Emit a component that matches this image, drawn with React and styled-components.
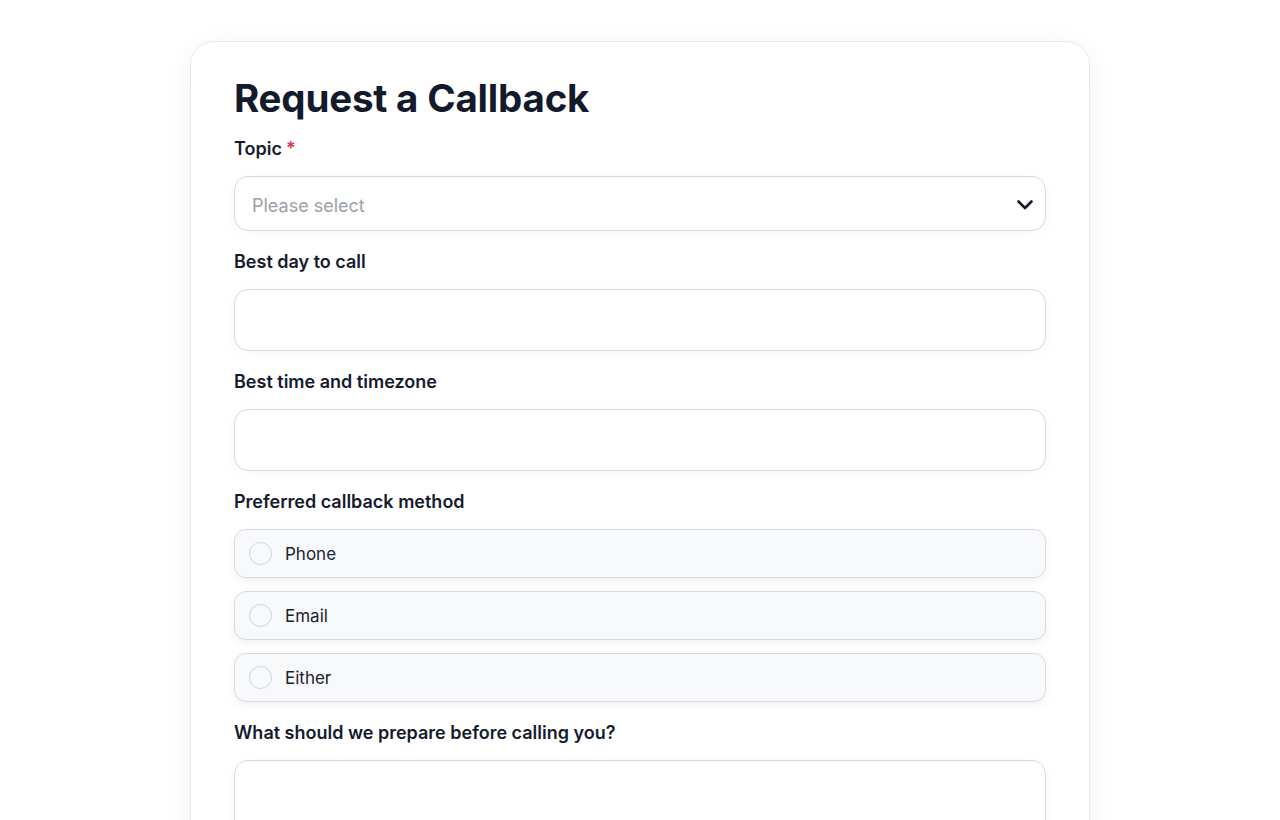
import React from 'react';
import styled, { createGlobalStyle } from 'styled-components';

const GlobalStyle = createGlobalStyle`
  * { box-sizing: border-box; }
  body {
    margin: 0;
    background: #ffffff;
    font-family: Inter, "Noto Sans", sans-serif;
    color: #141b2d;
  }
`;

const Page = styled.main`
  display: flex;
  justify-content: center;
  padding-top: 41px;
  min-height: 820px;
`;

const Card = styled.form`
  width: 900px;
  background: #fff;
  border: 1px solid #e6e8ec;
  border-radius: 24px;
  box-shadow: 0 6px 28px rgba(17, 24, 39, 0.06);
  padding: 31px 43px 40px;
  display: flex;
  flex-direction: column;
  gap: 19px;
`;

const Title = styled.h1`
  margin: 0 0 -5px;
  font-size: 38.5px;
  line-height: 50px;
  font-weight: 700;
  letter-spacing: -0.2px;
  color: #131a2b;
`;

const Field = styled.div`
  display: flex;
  flex-direction: column;
  gap: 15px;
`;

const Label = styled.label`
  font-size: 18px;
  line-height: 24px;
  font-weight: 600;
  color: #141b2d;
`;

const Required = styled.span`
  color: #dc3545;
  margin-left: 4px;
`;

const SelectBox = styled.div`
  height: 55px;
  border: 1px solid #d5d8df;
  border-radius: 14px;
  background: #fff;
  box-shadow: 0 2px 16px rgba(17, 24, 39, 0.03);
  display: flex;
  align-items: center;
  justify-content: space-between;
  padding: 0 8px 0 17px;
  font-size: 18px;
  color: #9ca0a8;
`;

const Placeholder = styled.span`
  padding-top: 4px;
`;

const Input = styled.input`
  height: 62px;
  border: 1px solid #d5d8df;
  border-radius: 14px;
  background: #fff;
  box-shadow: 0 2px 16px rgba(17, 24, 39, 0.03);
  padding: 0 17px;
  font: inherit;
  font-size: 18px;
  outline: none;
`;

const Textarea = styled.textarea`
  height: 120px;
  border: 1px solid #d5d8df;
  border-radius: 14px;
  background: #fff;
  box-shadow: 0 2px 16px rgba(17, 24, 39, 0.03);
  padding: 14px 17px;
  font: inherit;
  font-size: 18px;
  resize: none;
  outline: none;
`;

const Options = styled.div`
  display: flex;
  flex-direction: column;
  gap: 13px;
`;

const Option = styled.label`
  height: 49px;
  display: flex;
  align-items: center;
  gap: 13px;
  padding: 0 14px;
  background: #f8f9fb;
  border: 1px solid #d7dae0;
  border-radius: 12px;
  box-shadow: 0 3px 10px rgba(17, 24, 39, 0.06);
  font-size: 17px;
  color: #1c2232;
  cursor: pointer;
`;

const Circle = styled.span`
  width: 23px;
  height: 23px;
  border-radius: 50%;
  border: 1px solid #cfd3da;
  background: #f8f9fb;
  flex-shrink: 0;
`;

const Chevron = () => (
  <svg width="24" height="24" viewBox="0 0 24 24" fill="none" stroke="#131a2b" strokeWidth="2.6" strokeLinecap="round" strokeLinejoin="round">
    <path d="M5.5 9.5l6.5 6.5 6.5-6.5" />
  </svg>
);

const methods = ['Phone', 'Email', 'Either'];

export default function App() {
  return (
    <>
      <GlobalStyle />
      <Page>
        <Card onSubmit={(e) => e.preventDefault()}>
          <Title>Request a Callback</Title>
          <Field>
            <Label>Topic<Required>*</Required></Label>
            <SelectBox>
              <Placeholder>Please select</Placeholder>
              <Chevron />
            </SelectBox>
          </Field>
          <Field>
            <Label>Best day to call</Label>
            <Input type="text" />
          </Field>
          <Field>
            <Label>Best time and timezone</Label>
            <Input type="text" />
          </Field>
          <Field>
            <Label>Preferred callback method</Label>
            <Options>
              {methods.map((m) => (
                <Option key={m}>
                  <Circle />
                  {m}
                </Option>
              ))}
            </Options>
          </Field>
          <Field>
            <Label>What should we prepare before calling you?</Label>
            <Textarea />
          </Field>
        </Card>
      </Page>
    </>
  );
}
